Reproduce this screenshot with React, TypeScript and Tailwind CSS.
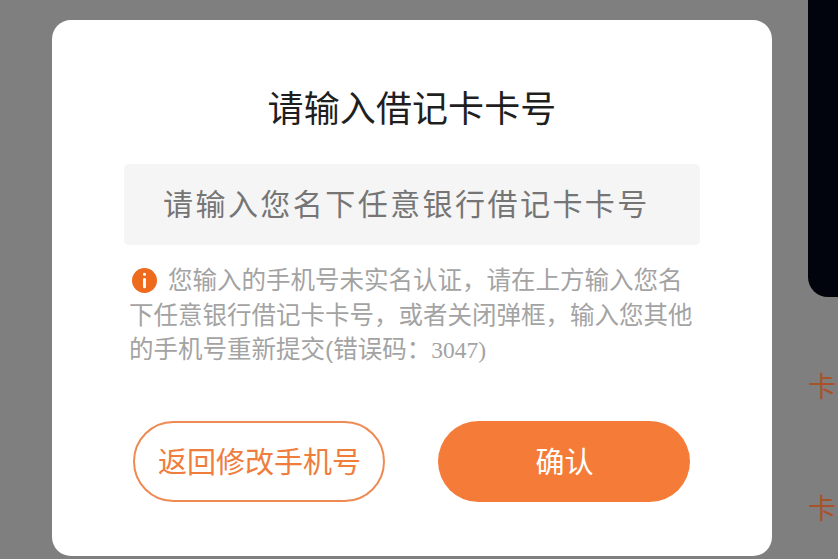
const cjk = "font-['Liberation_Sans','Noto_Sans_CJK_SC',sans-serif]";

function InfoIcon() {
  return (
    <svg viewBox="0 0 24 24" className="inline-block w-[25px] h-[25px] align-[-4px] mr-[11px]">
      <circle cx="12" cy="12" r="12" fill="#ee6a1c" />
      <rect x="10.6" y="4.5" width="2.8" height="3" rx="1.2" fill="#fff" />
      <rect x="10.6" y="9.5" width="2.8" height="10" rx="1.2" fill="#fff" />
    </svg>
  );
}

export default function App() {
  return (
    <div className={`flex w-[838px] h-[559px] overflow-hidden bg-[#7f7f7f] ${cjk}`}>
      <div className="w-[720px] h-[536px] shrink-0 ml-[52px] mt-[20px] bg-white rounded-[19px] flex flex-col items-center">
        <h1 className="mt-[65px] text-[36px] leading-[50px] tracking-[0.1px] text-[#1f1f1f] font-normal">请输入借记卡卡号</h1>
        <div className="mt-[29px] w-[576px] h-[81px] bg-[#f5f5f5] rounded-[5px] pl-[39px] flex items-center text-[30px] tracking-[2.45px] text-[#757575]">
          请输入您名下任意银行借记卡卡号
        </div>
        <p className="mt-[19px] w-[576px] pl-[5px] text-[24.5px] leading-[34.5px] text-[#a3a3a3] whitespace-nowrap">
          <span className="pl-[3px]"><InfoIcon /></span>
          您输入的手机号未实名认证，请在上方输入您名
          <br />
          下任意银行借记卡卡号，或者关闭弹框，输入您其他
          <br />
          的手机号重新提交(错误码：
          <span className="font-['Liberation_Serif',serif] text-[23.5px]">3047)</span>
        </p>
        <div className="mt-[53px] flex gap-[53px] pr-[2px]">
          <button className="w-[252px] h-[81px] pt-[5px] pl-[2px] rounded-full border-2 border-[#ee8a52] bg-white text-[#ef7d3c] text-[29px]">返回修改手机号</button>
          <button className="w-[252px] h-[81px] pt-[5px] pl-[2px] rounded-full bg-[#f57c38] text-white text-[29px]">确认</button>
        </div>
      </div>
      <div className="ml-[36px] w-[30px] shrink-0 flex flex-col">
        <div className="h-[297px] w-[60px] bg-[#01040c] rounded-bl-[20px]" />
        <span className="mt-[73px] text-[28px] leading-[36px] text-[#a8522a]">卡</span>
        <span className="mt-[86px] text-[28px] leading-[36px] text-[#a8522a]">卡</span>
      </div>
    </div>
  );
}
